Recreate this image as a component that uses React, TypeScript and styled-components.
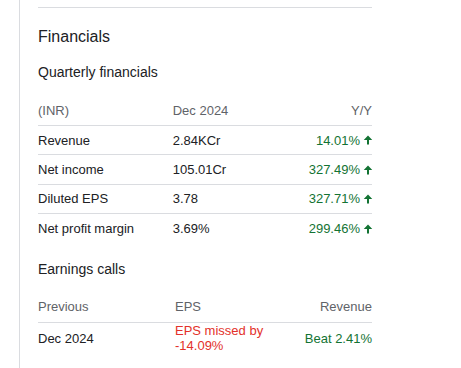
import React from "react";
import styled, { createGlobalStyle } from "styled-components";

const Global = createGlobalStyle`
  html, body { margin: 0; padding: 0; background: #fff; }
  body { font-family: "Liberation Sans", Arial, sans-serif; color: #202124; }
`;

const Frame = styled.div`
  margin-left: 19px;
  border-left: 1px solid #dadce0;
  min-height: 368px;
  padding: 7px 0 0 18px;
  box-sizing: border-box;
`;

const Panel = styled.section`
  width: 334px;
  border-top: 1px solid #dadce0;
`;

const Title = styled.h2`
  margin: 17px 0 0;
  font-size: 16px;
  line-height: 24px;
  font-weight: 400;
  color: #202124;
`;

const Subtitle = styled.h3<{ $gap: number }>`
  margin: ${(p) => p.$gap}px 0 0;
  font-size: 14px;
  line-height: 20px;
  font-weight: 400;
  color: #202124;
`;

const Table = styled.div<{ $gap: number }>`
  margin-top: ${(p) => p.$gap}px;
`;

const Row = styled.div<{ $cols: string; $head?: boolean; $last?: boolean }>`
  display: grid;
  grid-template-columns: ${(p) => p.$cols};
  align-items: center;
  box-sizing: border-box;
  height: ${(p) => (p.$head ? "30px" : "29.4px")};
  border-bottom: ${(p) => (p.$last ? "none" : "1px solid #dadce0")};
  font-size: 13px;
  line-height: 15px;
  color: ${(p) => (p.$head ? "#5f6368" : "#202124")};
`;

const Cell = styled.div<{ $right?: boolean; $tone?: "up" | "down" }>`
  display: flex;
  align-items: center;
  justify-content: ${(p) => (p.$right ? "flex-end" : "flex-start")};
  text-align: ${(p) => (p.$right ? "right" : "left")};
  color: ${(p) =>
    p.$tone === "up" ? "#137333" : p.$tone === "down" ? "#e3312a" : "inherit"};
`;

const CallRow = styled(Row)`
  height: 31px;
`;

const UpArrow = styled.svg`
  width: 12px;
  height: 12px;
  margin-left: 2px;
  margin-right: -2px;
  fill: #137333;
`;

const Arrow = () => (
  <UpArrow viewBox="0 0 24 24">
    <path d="M12 3L20.5 12H14V21H10V12H3.5Z" />
  </UpArrow>
);

const rows = [
  { label: "Revenue", value: "2.84KCr", change: "14.01%" },
  { label: "Net income", value: "105.01Cr", change: "327.49%" },
  { label: "Diluted EPS", value: "3.78", change: "327.71%" },
  { label: "Net profit margin", value: "3.69%", change: "299.46%" },
];

const QCOLS = "134.7px 1fr 1fr";
const ECOLS = "137px 100px 1fr";

export default function App() {
  return (
    <>
      <Global />
      <Frame>
        <Panel>
          <Title>Financials</Title>
          <Subtitle $gap={13}>Quarterly financials</Subtitle>
          <Table $gap={14}>
            <Row $cols={QCOLS} $head>
              <Cell>(INR)</Cell>
              <Cell>Dec 2024</Cell>
              <Cell $right>Y/Y</Cell>
            </Row>
            {rows.map((r, i) => (
              <Row key={r.label} $cols={QCOLS} $last={i === rows.length - 1}>
                <Cell>{r.label}</Cell>
                <Cell>{r.value}</Cell>
                <Cell $right $tone="up">
                  {r.change}
                  <Arrow />
                </Cell>
              </Row>
            ))}
          </Table>
          <Subtitle $gap={15}>Earnings calls</Subtitle>
          <Table $gap={13}>
            <CallRow $cols={ECOLS} $head>
              <Cell>Previous</Cell>
              <Cell>EPS</Cell>
              <Cell $right>Revenue</Cell>
            </CallRow>
            <CallRow $cols={ECOLS} $last>
              <Cell>Dec 2024</Cell>
              <Cell $tone="down">EPS missed by -14.09%</Cell>
              <Cell $right $tone="up">Beat 2.41%</Cell>
            </CallRow>
          </Table>
        </Panel>
      </Frame>
    </>
  );
}
